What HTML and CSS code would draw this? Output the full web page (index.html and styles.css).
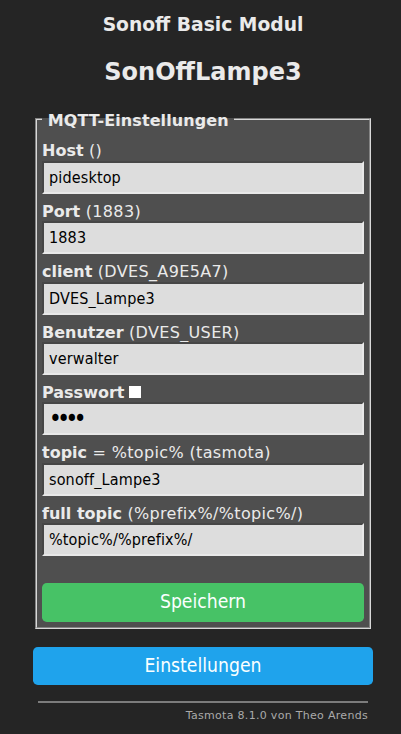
FILE: index.html
```html
<!DOCTYPE html>
<html lang="de">
<head>
<meta charset="utf-8">
<title>Sonoff Basic Modul - MQTT</title>
<link rel="stylesheet" href="styles.css">
</head>
<body>
<div class="page">
  <div class="head">
    <h3 class="module">Sonoff Basic Modul</h3>
    <h2 class="device">SonOffLampe3</h2>
  </div>
  <fieldset class="box">
    <legend class="box-title"><b>&nbsp;MQTT-Einstellungen&nbsp;</b></legend>
    <form class="form" action="#" method="get">
      <div class="row"><div class="label"><b>Host</b> ()</div><input class="field" value="pidesktop"></div>
      <div class="row"><div class="label"><b>Port</b> (1883)</div><input class="field" value="1883"></div>
      <div class="row"><div class="label"><b>client</b> (DVES_A9E5A7)</div><input class="field" value="DVES_Lampe3"></div>
      <div class="row"><div class="label"><b>Benutzer</b> (DVES_USER)</div><input class="field" value="verwalter"></div>
      <div class="row"><div class="label"><b>Passwort</b><input class="check" type="checkbox"></div><input class="field secret" type="password" value="****"></div>
      <div class="row"><div class="label"><b>topic</b> = %topic% (tasmota)</div><input class="field" value="sonoff_Lampe3"></div>
      <div class="row"><div class="label"><b>full topic</b> (%prefix%/%topic%/)</div><input class="field" value="%topic%/%prefix%/"></div>
      <button class="btn btn-green" type="button">Speichern</button>
    </form>
  </fieldset>
  <button class="btn btn-blue nav" type="button">Einstellungen</button>
  <div class="footer">
    <hr class="rule">
    <a class="credit" href="#">Tasmota 8.1.0 von Theo Arends</a>
  </div>
</div>
</body>
</html>
```

FILE: styles.css
```css
html, body {
  margin: 0;
  padding: 0;
  background: #252525;
}
body {
  font-family: "DejaVu Sans", Verdana, sans-serif;
  color: #eaeaea;
}
.page {
  width: 340px;
  margin-left: 33px;
  padding-top: 13px;
}
.head {
  text-align: center;
}
.module {
  margin: 0;
  font-size: 18.72px;
  line-height: 23px;
  font-weight: bold;
}
.device {
  margin: 22px 0 0;
  font-size: 24px;
  line-height: 28px;
  font-weight: bold;
}
.box {
  margin: 21px 2px 0;
  padding: 0 5px 5px;
  border: 2px groove #d8d8d8;
  background: #4f4f4f;
  min-width: 0;
}
.box-title {
  padding: 4px 0 0;
  font-size: 16px;
  line-height: 19.4px;
  letter-spacing: 0.1px;
}
.form {
  display: flex;
  flex-direction: column;
  gap: 8px;
  padding-top: 11px;
  margin: 0;
}
.row {
  display: flex;
  flex-direction: column;
}
.label {
  font-size: 16px;
  line-height: 19.4px;
  white-space: nowrap;
  letter-spacing: 0.35px;
}
.label b {
  letter-spacing: 0;
}
.field {
  box-sizing: border-box;
  width: 100%;
  height: 33px;
  margin: 0;
  padding: 5px;
  border: 2px inset #9a9a9a;
  border-right-color: #e8e8e8;
  border-bottom-color: #e8e8e8;
  background: #dddddd;
  color: #000;
  font-family: "DejaVu Sans Condensed", Tahoma, "Lato", sans-serif;
  font-size: 16px;
  letter-spacing: 0.15px;
  outline: none;
}
.secret {
  font-size: 24px;
  letter-spacing: -4.5px;
  padding: 0 5px;
}
.check {
  -webkit-appearance: none;
  appearance: none;
  width: 12px;
  height: 12px;
  margin: 0 0 0 5px;
  padding: 0;
  border: 0;
  background: #ffffff;
  vertical-align: baseline;
}
.btn {
  display: block;
  width: 100%;
  height: 38.4px;
  border: 0;
  border-radius: 4.8px;
  padding: 0;
  color: #faffff;
  font-family: "DejaVu Sans Condensed", Tahoma, "Lato", sans-serif;
  font-size: 19.2px;
  line-height: 38.4px;
  text-align: center;
}
.btn-green {
  background: #47c266;
  margin-top: 19px;
}
.btn-blue {
  background: #1fa3ec;
}
.nav {
  margin-top: 18px;
}
.footer {
  padding: 0 5px;
  margin-top: 16px;
  text-align: right;
  font-size: 11px;
}
.rule {
  height: 2px;
  margin: 5px 0 0;
  border: 0;
  background: #7c7c7c;
}
.credit {
  display: block;
  margin-top: 6px;
  color: #aaaaaa;
  text-decoration: none;
  line-height: 13px;
  letter-spacing: 0.3px;
}
```
